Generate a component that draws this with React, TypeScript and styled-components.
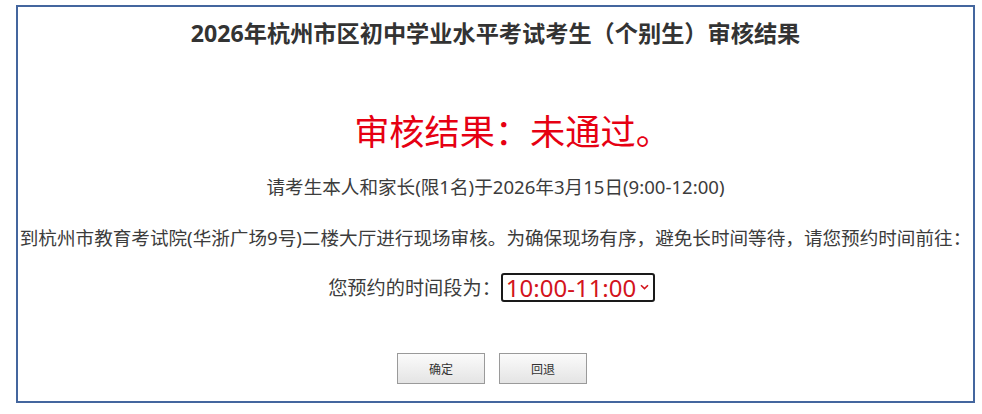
import React from 'react';
import styled, { createGlobalStyle } from 'styled-components';

const GlobalStyle = createGlobalStyle`
  html, body {
    margin: 0;
    padding: 0;
    background: #ffffff;
  }
  body {
    font-family: "Noto Sans", "Noto Sans CJK SC", sans-serif;
    color: #333333;
  }
`;

const Page = styled.div`
  padding: 5px 0 0 16px;
`;

const Panel = styled.div`
  box-sizing: border-box;
  width: 959px;
  height: 398px;
  border: 2px solid #44669e;
  display: flex;
  flex-direction: column;
  align-items: center;
  padding-top: 10px;
`;

const Title = styled.h1`
  margin: 0;
  font-size: 23.2px;
  line-height: 32px;
  font-weight: 700;
  color: #333333;
`;

const Result = styled.div`
  margin-top: 60px;
  padding-left: 34px;
  font-size: 35.2px;
  line-height: 44px;
  color: #e60012;
`;

const Line = styled.p<{ $gap: number }>`
  margin: ${p => p.$gap}px 0 0;
  font-size: 18.6px;
  line-height: 26px;
  color: #3c3c3c;
  white-space: nowrap;
`;

const PickRow = styled.div`
  margin-top: 21px;
  display: flex;
  align-items: center;
  gap: 0;
  height: 30px;
  padding-right: 8px;
`;

const PickLabel = styled.span`
  font-size: 19.2px;
  color: #3c3c3c;
`;

const SelectWrap = styled.label`
  display: inline-flex;
  align-items: center;
  box-sizing: border-box;
  height: 29px;
  border: 2px solid #1a1a1a;
  border-radius: 3px;
  padding: 0 4px 0 3px;
  gap: 3px;
`;

const TimeSelect = styled.select`
  appearance: none;
  border: none;
  outline: none;
  background: transparent;
  padding: 0;
  margin: 0;
  font-family: "Noto Sans", "Noto Sans CJK SC", sans-serif;
  font-size: 24px;
  line-height: 25px;
  color: #d3141c;
`;

const ButtonRow = styled.div`
  margin-top: 51px;
  margin-right: 7px;
  display: flex;
  gap: 14px;
`;

const Button = styled.button`
  box-sizing: border-box;
  width: 88px;
  height: 31px;
  border: 1px solid #9a9a9a;
  background: linear-gradient(#fbfbfb, #e4e4e4);
  font-family: "Noto Sans CJK SC", sans-serif;
  font-size: 12px;
  color: #333333;
  padding: 0;
  cursor: pointer;
`;

const Chevron = () => (
  <svg width="9" height="6" viewBox="0 0 9 6">
    <path d="M1 1.2 L4.5 4.6 L8 1.2" fill="none" stroke="#d3141c" strokeWidth="1.6" />
  </svg>
);

export default function App() {
  return (
    <Page>
      <GlobalStyle />
      <Panel>
        <Title>2026年杭州市区初中学业水平考试考生（个别生）审核结果</Title>
        <Result>审核结果：未通过。</Result>
        <Line $gap={21}>请考生本人和家长(限1名)于2026年3月15日(9:00-12:00)</Line>
        <Line $gap={25}>
          到杭州市教育考试院(华浙广场9号)二楼大厅进行现场审核。为确保现场有序，避免长时间等待，请您预约时间前往：
        </Line>
        <PickRow>
          <PickLabel>您预约的时间段为：</PickLabel>
          <SelectWrap>
            <TimeSelect defaultValue="10:00-11:00">
              <option>9:00-10:00</option>
              <option>10:00-11:00</option>
              <option>11:00-12:00</option>
            </TimeSelect>
            <Chevron />
          </SelectWrap>
        </PickRow>
        <ButtonRow>
          <Button>确定</Button>
          <Button>回退</Button>
        </ButtonRow>
      </Panel>
    </Page>
  );
}
